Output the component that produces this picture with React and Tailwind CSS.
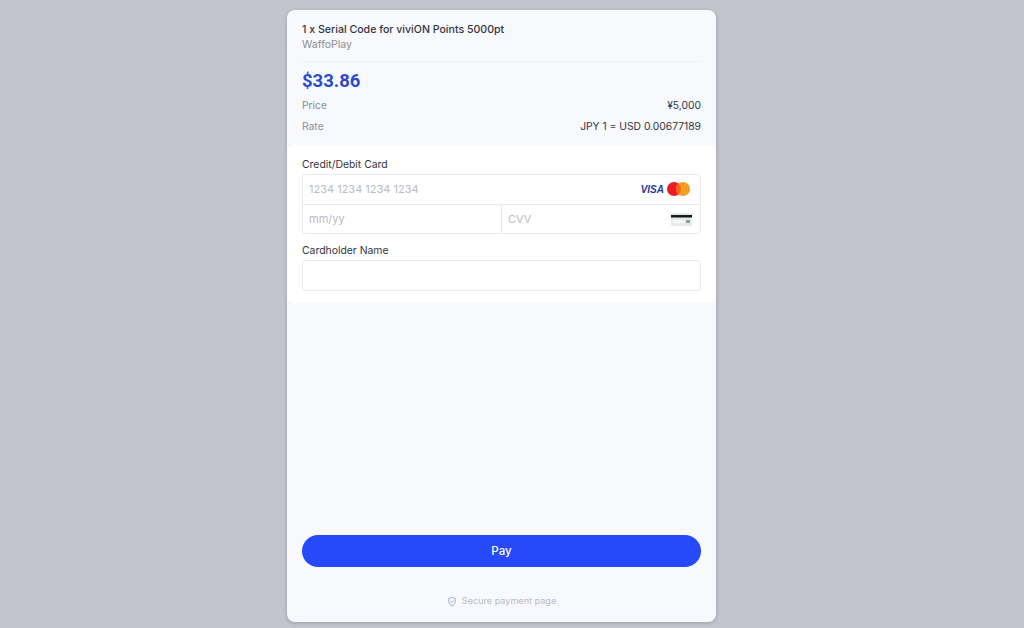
export default function App() {
  return (
    <div className="h-[628px] overflow-hidden bg-[#c3c4ce] flex justify-center pt-[10px] pr-[21px] font-['Inter',sans-serif] antialiased">
      <div className="w-[429px] h-[612px] rounded-lg bg-[#f7f9fd] shadow-[0_1px_4px_rgba(0,0,0,0.2)] flex flex-col overflow-hidden">
        <div className="px-[15px] pt-[12px] h-[135px]">
          <div className="pb-[9px] border-b border-[#f0f1f5]">
            <div className="text-[10.6px] leading-[15px] font-medium text-[#33353d]">1 x Serial Code for viviON Points 5000pt</div>
            <div className="text-[10.5px] leading-[15px] text-[#8a8d96]">WaffoPlay</div>
          </div>
          <div className="mt-[7px] font-['Roboto',sans-serif] text-[18.5px] leading-[24px] font-bold text-[#2b4acb]">$33.86</div>
          <div className="mt-[2px] flex justify-between text-[10.3px] leading-[20px] h-[20px]">
            <span className="text-[#8a8d96]">Price</span>
            <span className="text-[#33353d]">¥5,000</span>
          </div>
          <div className="mt-[1px] flex justify-between text-[10.3px] leading-[20px] h-[20px]">
            <span className="text-[#8a8d96]">Rate</span>
            <span className="text-[#33353d]">JPY 1 = USD 0.00677189</span>
          </div>
        </div>
        <div className="bg-white rounded-lg h-[158px] px-[15px] pt-[12px]">
          <div className="text-[10.4px] leading-[15px] text-[#33353d]">Credit/Debit Card</div>
          <div className="mt-[2px] border border-[#e9eaed] rounded-[3px]">
            <div className="h-[30px] flex items-center justify-between pl-[6px] pr-[10px] border-b border-[#e9eaed]">
              <span className="text-[11px] text-[#b9bbc1]">1234 1234 1234 1234</span>
              <div className="flex items-center gap-[3px] pb-[1px]">
                <span className="font-['Liberation_Sans',sans-serif] italic font-bold text-[10px] text-[#1f3a93]">VISA</span>
                <svg width="23" height="14" viewBox="0 0 23 14">
                  <circle cx="7" cy="7" r="7" fill="#eb1c26" />
                  <circle cx="16" cy="7" r="7" fill="#f59e1f" />
                  <path d="M11.5 1.6a7 7 0 0 1 0 10.8a7 7 0 0 1 0-10.8z" fill="#f4641e" />
                </svg>
              </div>
            </div>
            <div className="h-[28px] flex">
              <div className="w-[199px] border-r border-[#e9eaed] flex items-center pl-[6px] text-[11px] text-[#b9bbc1]">mm/yy</div>
              <div className="flex-1 flex items-center justify-between pl-[6px] pr-[8px] text-[11px] text-[#b9bbc1]">
                <span>CVV</span>
                <svg width="21" height="13" viewBox="0 0 21 13">
                  <rect x="0" y="0" width="21" height="13" rx="1" fill="#e4ebe9" />
                  <rect x="0" y="2" width="21" height="2.500" fill="#17191c" />
                  <rect x="2" y="7" width="12" height="3" fill="#f6f8f7" />
                  <rect x="15" y="7" width="4" height="3" fill="#8ea3a0" />
                </svg>
              </div>
            </div>
          </div>
          <div className="mt-[9px] text-[10.4px] leading-[15px] text-[#33353d]">Cardholder Name</div>
          <div className="mt-[2px] h-[31px] border border-[#e9eaed] rounded-[3px]" />
        </div>
        <div className="flex-1 flex flex-col px-[15px]">
          <div className="mt-auto h-[32px] pt-[1px] rounded-full bg-[#2549fb] text-white text-[11.500px] font-medium flex items-center justify-center">Pay</div>
          <div className="mt-[26px] mb-[13px] h-[16px] flex items-center justify-center gap-[5px] text-[9.1px] text-[#b9bcc4]">
            <svg width="10" height="11" viewBox="0 0 24 24" fill="none" stroke="#8fa6c4" strokeWidth="2" strokeLinecap="round" strokeLinejoin="round">
              <path d="M12 22s8-3.500 8-10V5l-8-3-8 3v7c0 6.500 8 10 8 10z" />
              <path d="M8.500 12l2.500 2.500 4.500-4.500" />
            </svg>
            <span>Secure payment page</span>
          </div>
        </div>
      </div>
    </div>
  );
}
